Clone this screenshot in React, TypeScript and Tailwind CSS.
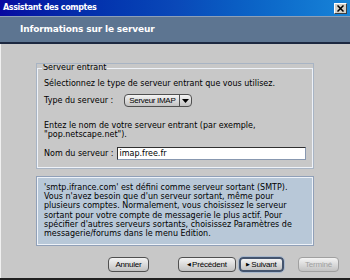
const font = { fontFamily: '"DejaVu Sans", Verdana, sans-serif' };
const btnFont = { fontFamily: '"Liberation Sans", Arial, sans-serif' };

const Btn = ({ label, w, variant }: { label: React.ReactNode; w: string; variant?: "focus" | "disabled" }) => (
  <div
    style={btnFont}
    className={`${w} shrink-0 h-[15px] flex items-center justify-center rounded-[4px] text-[8px] leading-none tracking-[-0.2px] bg-gradient-to-b from-[#f4f4f4] to-[#c2c2c2] ${
      variant === "focus"
        ? "border-2 border-[#44546e] outline outline-1 outline-[#a8b8cc]"
        : variant === "disabled"
        ? "border border-[#a0a0a0] text-[#a0a0a0]"
        : "border border-[#505050] text-black"
    }`}
  >
    {label}
  </div>
);

export default function App() {
  return (
    <div className="w-[350px] h-[280px] bg-[#c8c8c8] flex flex-col border-b-2 border-[#202020] overflow-hidden" style={font}>
      {/* title bar */}
      <div className="h-[16px] shrink-0 flex items-center justify-between pl-[3px] pr-[3px] bg-gradient-to-r from-[#0808a0] via-[#0a48b8] to-[#1884d8]">
        <span className="text-white font-bold text-[8px] tracking-[-0.4px]">Assistant des comptes</span>
        <div className="w-[13px] h-[11px] bg-[#d4d0c8] border border-t-white border-l-white border-r-[#404040] border-b-[#404040] flex items-center justify-center">
          <svg width="7" height="7" viewBox="0 0 7 7">
            <path d="M0.5 0.5 L6.5 6.5 M6.5 0.5 L0.5 6.5" stroke="#000" strokeWidth="1.5" />
          </svg>
        </div>
      </div>
      {/* header */}
      <div className="h-[28px] shrink-0 bg-[#5d7591] border-t border-[#8da0b8] border-b-2 border-b-[#1c2840] flex items-center pl-[20px]">
        <span className="text-white font-bold text-[9px] tracking-[-0.15px]">Informations sur le serveur</span>
      </div>
      <div className="flex-1 border-l border-[#f0f0f0] pl-[36px] pr-[37px] flex flex-col">
        <fieldset className="mt-[20px] border border-[#eef2f8] outline outline-1 outline-[#a8b4c4] px-[6px] pb-[7px] text-[8px] text-black">
          <legend className="px-[1px] ml-[-2px] leading-none">Serveur entrant</legend>
          <div className="mt-[8px] leading-none">Sélectionnez le type de serveur entrant que vous utilisez.</div>
          <div className="mt-[6px] flex items-center">
            <span className="leading-none">Type du serveur :</span>
            <div className="ml-[11px] h-[13px] flex rounded-[4px] border border-[#505050] bg-gradient-to-b from-[#f4f4f4] to-[#c2c2c2] overflow-hidden">
              <span style={btnFont} className="px-[4px] flex items-center text-[8px] tracking-[-0.3px] leading-none">Serveur IMAP</span>
              <span className="w-[12px] border-l border-[#505050] flex items-center justify-center">
                <svg width="7" height="4" viewBox="0 0 7 4">
                  <path d="M0 0 H7 L3.5 4 Z" fill="#000" />
                </svg>
              </span>
            </div>
          </div>
          <div className="mt-[14px] leading-[9px]">
            Entez le nom de votre serveur entrant (par exemple,
            <br />
            "pop.netscape.net").
          </div>
          <div className="mt-[8px] flex items-center">
            <span className="leading-none">Nom du serveur :</span>
            <div className="ml-[3px] flex-1 h-[13px] bg-white border border-[#303030] border-r-[#8898b0] border-b-[#8898b0] flex items-center pl-[2px] leading-none">
              imap.free.fr
            </div>
          </div>
        </fieldset>
        <div className="mt-[9px] h-[68px] shrink-0 bg-[#b8c8d8] border border-[#eef2f8] outline outline-1 outline-[#90a0b8] px-[6px] pt-[5px] text-[8px] leading-[9.2px] text-black whitespace-nowrap">
          'smtp.ifrance.com' est défini comme serveur sortant (SMTP).
          <br />
          Vous n'avez besoin que d'un serveur sortant, même pour
          <br />
          plusieurs comptes. Normalement, vous choisissez le serveur
          <br />
          sortant pour votre compte de messagerie le plus actif. Pour
          <br />
          spécifier d'autres serveurs sortants, choisissez Paramètres de
          <br />
          messagerie/forums dans le menu Edition.
        </div>
        <div className="mt-[12px] ml-[71px] flex items-center">
          <Btn w="w-[41px]" label="Annuler" />
          <div className="ml-[29px] shrink-0">
            <Btn w="w-[58px]" label={<><span className="text-[5px] mr-[1px]">◀</span>Précédent</>} />
          </div>
          <div className="ml-[3px] shrink-0">
            <Btn w="w-[45px]" variant="focus" label={<><span className="text-[5px] mr-[1px]">▶</span>Suivant</>} />
          </div>
          <div className="ml-[14px] shrink-0">
            <Btn w="w-[41px]" variant="disabled" label="Terminé" />
          </div>
        </div>
      </div>
    </div>
  );
}
